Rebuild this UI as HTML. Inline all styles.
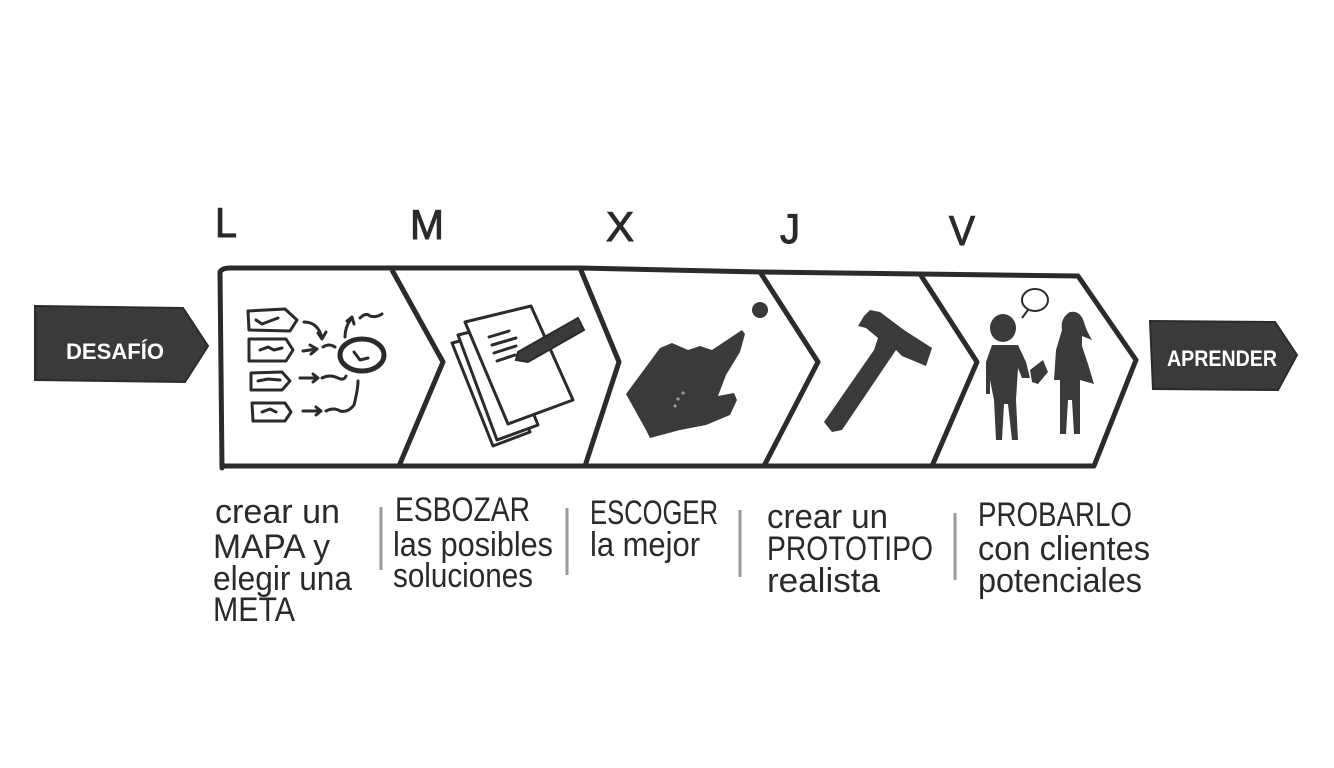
<!DOCTYPE html>
<html><head><meta charset="utf-8"><style>
html,body{margin:0;padding:0;background:#fff;width:1334px;height:768px;overflow:hidden}
svg{display:block}
text{font-family:"Liberation Sans",sans-serif;fill:#2a2a2a}
</style></head><body>
<svg width="1334" height="768" viewBox="0 0 1334 768" xmlns="http://www.w3.org/2000/svg">
<rect width="1334" height="768" fill="#fff"/>
<g font-size="42" text-anchor="middle" style="stroke:#2a2a2a;stroke-width:1">
<text x="226" y="237" textLength="22" lengthAdjust="spacingAndGlyphs">L</text>
<text x="427" y="239" textLength="34" lengthAdjust="spacingAndGlyphs">M</text>
<text x="620" y="241" textLength="28" lengthAdjust="spacingAndGlyphs">X</text>
<text x="790" y="243" textLength="20" lengthAdjust="spacingAndGlyphs">J</text>
<text x="962" y="245" textLength="26" lengthAdjust="spacingAndGlyphs">V</text>
</g>
<g fill="none" stroke="#2b2b2b" stroke-width="5" stroke-linejoin="round">
<path d="M222 468 L220 272 Q222 268 230 268 L580 268 L760 272 L920 274 L1078 276 L1136 360 L1094 466 L222 466 Z"/>
<path d="M392 270 L443 362 L399 466"/>
<path d="M580 268 L619 362 L585 466"/>
<path d="M760 272 L818 362 L764 466"/>
<path d="M920 274 L977 362 L932 466"/>
</g>
<path d="M35 306 L183 308 L208 346 L185 382 L35 380 Z" fill="#3a3a3a" stroke="#2b2b2b" stroke-width="2"/>
<text x="66" y="359" font-size="22" font-weight="bold" style="fill:#fff" textLength="98" lengthAdjust="spacingAndGlyphs">DESAFÍO</text>
<path d="M1150 321 L1275 322 L1297 355 L1278 390 L1153 389 Z" fill="#3a3a3a" stroke="#2b2b2b" stroke-width="2"/>
<text x="1167" y="366" font-size="22" font-weight="bold" style="fill:#fff" textLength="110" lengthAdjust="spacingAndGlyphs">APRENDER</text>
<g fill="none" stroke="#2b2b2b" stroke-width="3" stroke-linejoin="round" stroke-linecap="round">
<path d="M248 311 L285 309 L297 320 L290 331 L249 330 Z"/>
<path d="M249 339 L286 339 L293 350 L286 361 L249 361 Z"/>
<path d="M251 373 L282 372 L290 381 L282 390 L251 390 Z"/>
<path d="M252 403 L285 403 L291 412 L285 421 L253 421 Z"/>
<path d="M256 320 l6 4 l16 -6 M260 350 l8 -3 l6 3 l8 -2 M258 381 l10 -2 l12 1 M262 412 l8 -3 l6 3"/>
<path d="M304 322 q14 0 18 16 M318 333 l4 6 l4 -7"/>
<path d="M303 351 l14 -2 M310 345 l7 4 l-6 5 M323 347 q6 -4 12 0"/>
<path d="M300 378 l18 0 M313 374 l5 4 l-5 4 M322 378 q8 -4 16 0 q6 3 8 -2"/>
<path d="M303 411 l18 0 M316 407 l5 4 l-5 4 M326 411 q8 -4 14 0 q8 2 14 -6 q4 -16 4 -24"/>
<path d="M345 337 q0 -10 6 -18 M347 321 l5 -4 l2 7"/>
<path d="M360 318 q6 -6 10 -2 q6 2 12 -2"/>
<ellipse cx="362" cy="355" rx="22" ry="16" stroke-width="5"/>
<path d="M354 352 l6 8 l8 -2"/>
</g>
<g stroke="#2b2b2b" stroke-width="3" stroke-linejoin="round" fill="#fff">
<path d="M452 343 L492 333 L530 432 L493 446 Z"/>
<path d="M458 335 L498 325 L538 425 L497 440 Z"/>
<path d="M465 322 L531 306 L573 400 L508 424 Z"/>
</g>
<g stroke="#2b2b2b" stroke-width="3" fill="none" stroke-linecap="round">
<path d="M489 337 l20 -6 M492 345 l24 -7 M494 353 l22 -7 M497 361 l18 -6"/>
</g>
<path d="M518 352 L578 318 L584 330 L528 362 L516 360 Z" fill="#3a3a3a" stroke="#2b2b2b" stroke-width="2"/>
<g fill="#3a3a3a">
<circle cx="760" cy="310" r="8"/>
<path d="M626 394 L660 348 L672 343 L688 350 L700 346 L712 350 L742 330 L745 334 L740 352 L726 375 L718 396 L734 393 L737 400 L730 415 L706 425 L680 430 L650 438 L646 430 Z"/>
</g>
<circle cx="683" cy="393" r="1.6" fill="#999"/><circle cx="678" cy="399" r="1.6" fill="#999"/><circle cx="675" cy="406" r="1.6" fill="#999"/>
<g fill="#3a3a3a">
<path d="M864 316 L870 310 L880 312 L904 330 L932 348 L926 366 L902 356 L896 350 L842 430 L832 432 L824 422 L874 350 L878 338 L866 328 L858 326 Z"/>
</g>
<ellipse cx="1035" cy="300" rx="13" ry="11" fill="none" stroke="#2b2b2b" stroke-width="2"/>
<path d="M1028 310 l-6 8" stroke="#2b2b2b" stroke-width="2"/>
<g fill="#3a3a3a">
<ellipse cx="1003" cy="328" rx="13" ry="14"/>
<path d="M992 345 L1018 345 L1026 362 L1030 378 L1022 378 L1018 368 L1016 400 L1018 440 L1012 440 L1008 404 L1004 404 L1002 440 L996 440 L994 400 L990 380 L990 394 L986 394 L986 362 Z"/>
<path d="M1030 370 L1043 360 L1048 372 L1038 384 L1032 382 Z"/>
<path d="M1070 312 Q1060 318 1062 330 L1056 350 L1054 380 L1060 380 L1060 434 L1066 434 L1068 400 L1072 400 L1074 434 L1080 434 L1080 380 L1094 384 L1088 364 L1082 346 L1082 336 L1092 340 Q1086 330 1084 322 Q1080 310 1070 312 Z"/>
</g>
<g stroke="#9a9a9a" stroke-width="3">
<line x1="381" y1="507" x2="381" y2="570"/>
<line x1="567" y1="508" x2="567" y2="575"/>
<line x1="740" y1="510" x2="740" y2="577"/>
<line x1="955" y1="513" x2="955" y2="580"/>
</g>
<g font-size="34">
<text x="215" y="523" textLength="125" lengthAdjust="spacingAndGlyphs">crear un</text>
<text x="213" y="558" textLength="117" lengthAdjust="spacingAndGlyphs">MAPA y</text>
<text x="213" y="590" textLength="139" lengthAdjust="spacingAndGlyphs">elegir una</text>
<text x="213" y="621" textLength="82" lengthAdjust="spacingAndGlyphs">META</text>
<text x="395" y="521" textLength="135" lengthAdjust="spacingAndGlyphs">ESBOZAR</text>
<text x="393" y="556" textLength="160" lengthAdjust="spacingAndGlyphs">las posibles</text>
<text x="393" y="587" textLength="140" lengthAdjust="spacingAndGlyphs">soluciones</text>
<text x="590" y="524" textLength="128" lengthAdjust="spacingAndGlyphs">ESCOGER</text>
<text x="590" y="556" textLength="110" lengthAdjust="spacingAndGlyphs">la mejor</text>
<text x="767" y="528" textLength="121" lengthAdjust="spacingAndGlyphs">crear un</text>
<text x="767" y="560" textLength="166" lengthAdjust="spacingAndGlyphs">PROTOTIPO</text>
<text x="767" y="592" textLength="113" lengthAdjust="spacingAndGlyphs">realista</text>
<text x="978" y="526" textLength="154" lengthAdjust="spacingAndGlyphs">PROBARLO</text>
<text x="978" y="560" textLength="172" lengthAdjust="spacingAndGlyphs">con clientes</text>
<text x="978" y="592" textLength="164" lengthAdjust="spacingAndGlyphs">potenciales</text>
</g>
</svg>
</body></html>
